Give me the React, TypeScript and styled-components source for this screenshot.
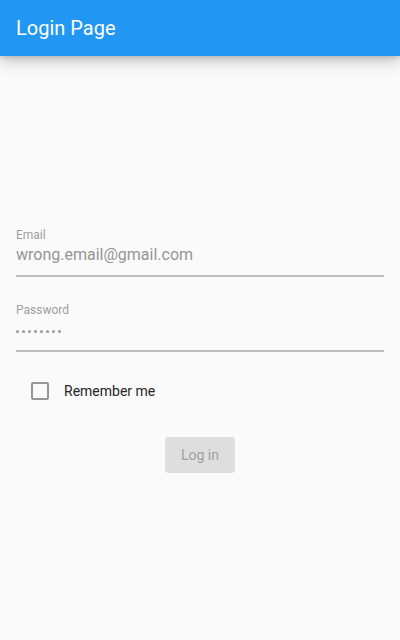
import React from "react";
import styled, { createGlobalStyle } from "styled-components";

const Global = createGlobalStyle`
  html, body { margin: 0; padding: 0; background: #fafafa; }
  body { font-family: Roboto, "Liberation Sans", sans-serif; }
  * { box-sizing: border-box; }
`;

const Page = styled.div`
  width: 400px;
  height: 640px;
  background: #fafafa;
  display: flex;
  flex-direction: column;
  overflow: hidden;
`;

const AppBar = styled.header`
  height: 56px;
  flex: none;
  background: #2196f3;
  display: flex;
  align-items: center;
  padding: 0 16px;
  box-shadow: 0 6px 14px rgba(0, 0, 0, 0.2), 0 2px 4px rgba(0, 0, 0, 0.12);
  position: relative;
  z-index: 1;
`;

const Title = styled.h1`
  margin: 0;
  font-size: 20px;
  font-weight: 400;
  color: #fff;
  padding-bottom: 1px;
`;

const Form = styled.main`
  display: flex;
  flex-direction: column;
  padding: 171px 16px 0;
`;

const Field = styled.div<{ $gap?: number }>`
  display: flex;
  flex-direction: column;
  margin-top: ${(p) => p.$gap ?? 0}px;
  border-bottom: 2px solid #bdbdbd;
  padding-bottom: 8px;
`;

const Label = styled.label`
  font-size: 12px;
  line-height: 16px;
  color: #9e9e9e;
`;

const Value = styled.div`
  font-size: 16px;
  line-height: 24px;
  color: #959595;
  height: 24px;
`;

const Dots = styled.div`
  height: 24px;
  display: flex;
  align-items: center;
  gap: 3px;
  padding-top: 2px;
`;

const Dot = styled.span`
  width: 3px;
  height: 3px;
  border-radius: 50%;
  background: #9a9a9a;
`;

const CheckRow = styled.div`
  display: flex;
  align-items: center;
  margin-top: 30px;
  padding-left: 15px;
  height: 18px;
`;

const Box = styled.span`
  width: 18px;
  height: 18px;
  border: 2px solid #959595;
  border-radius: 2px;
  flex: none;
`;

const CheckLabel = styled.span`
  margin-left: 15px;
  font-size: 14px;
  color: #262626;
`;

const ButtonRow = styled.div`
  display: flex;
  justify-content: center;
  margin-top: 37px;
`;

const Button = styled.button`
  width: 70px;
  height: 36px;
  border: none;
  border-radius: 4px;
  background: #dedede;
  color: #a0a0a0;
  font-family: Roboto, "Liberation Sans", sans-serif;
  font-size: 14px;
  padding: 0;
`;

export default function App() {
  return (
    <Page>
      <Global />
      <AppBar>
        <Title>Login Page</Title>
      </AppBar>
      <Form>
        <Field>
          <Label>Email</Label>
          <Value>wrong.email@gmail.com</Value>
        </Field>
        <Field $gap={25}>
          <Label>Password</Label>
          <Dots>
            {Array.from({ length: 8 }).map((_, i) => (
              <Dot key={i} />
            ))}
          </Dots>
        </Field>
        <CheckRow>
          <Box />
          <CheckLabel>Remember me</CheckLabel>
        </CheckRow>
        <ButtonRow>
          <Button disabled>Log in</Button>
        </ButtonRow>
      </Form>
    </Page>
  );
}
